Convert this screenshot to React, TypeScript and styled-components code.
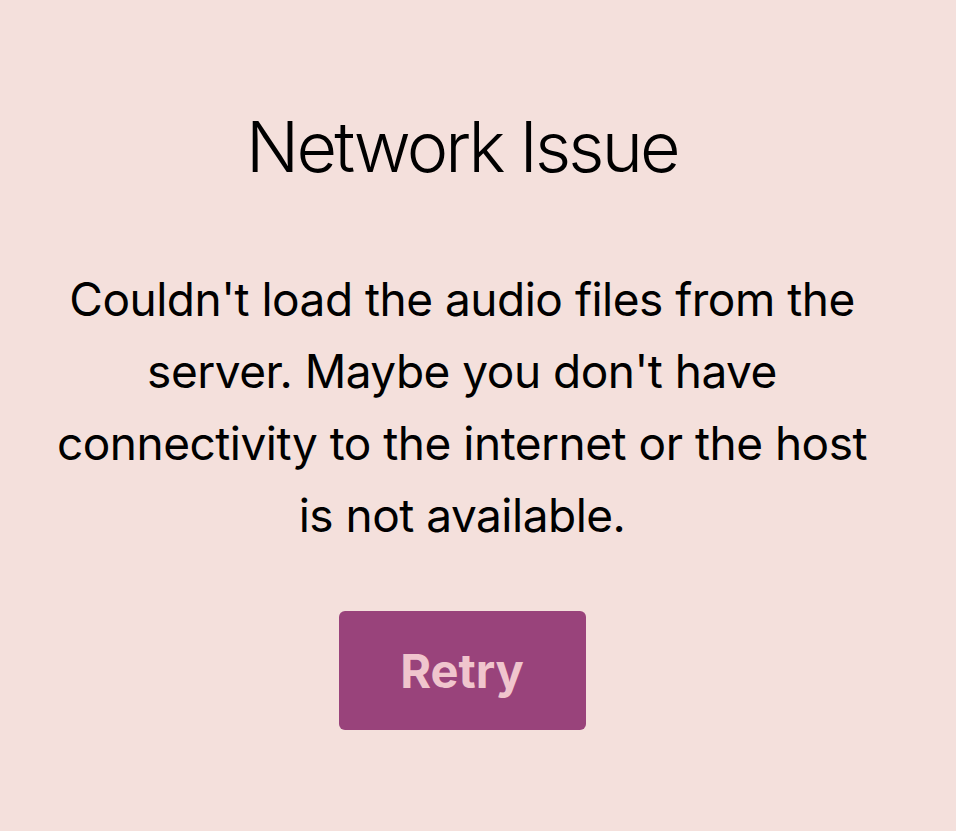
import React from "react";
import styled, { createGlobalStyle } from "styled-components";

const Global = createGlobalStyle`
  html, body { margin: 0; padding: 0; background: #f4e0dc; }
  body { font-family: Inter, "Noto Sans", "Liberation Sans", sans-serif; color: #000; }
`;

const Page = styled.main`
  box-sizing: border-box;
  width: 924px;
  min-height: 831px;
  display: flex;
  flex-direction: column;
  align-items: center;
  padding-top: 105px;
`;

const Title = styled.h1`
  margin: 0;
  font-size: 70px;
  font-weight: 300;
  line-height: 84px;
  letter-spacing: -2.8px;
`;

const Message = styled.p`
  margin: 74px 0 0;
  width: 830px;
  text-align: center;
  font-size: 46px;
  font-weight: 400;
  line-height: 72px;
  letter-spacing: -0.5px;
`;

const RetryButton = styled.button`
  margin-top: 60px;
  width: 247px;
  height: 119px;
  border: none;
  border-radius: 6px;
  background: #99437b;
  color: #f0c5cd;
  font-family: inherit;
  font-size: 47px;
  font-weight: 700;
  cursor: pointer;
`;

export default function App() {
  return (
    <>
      <Global />
      <Page>
        <Title>Network Issue</Title>
        <Message>
          Couldn't load the audio files from the server. Maybe you don't have
          connectivity to the internet or the host is not available.
        </Message>
        <RetryButton>Retry</RetryButton>
      </Page>
    </>
  );
}
